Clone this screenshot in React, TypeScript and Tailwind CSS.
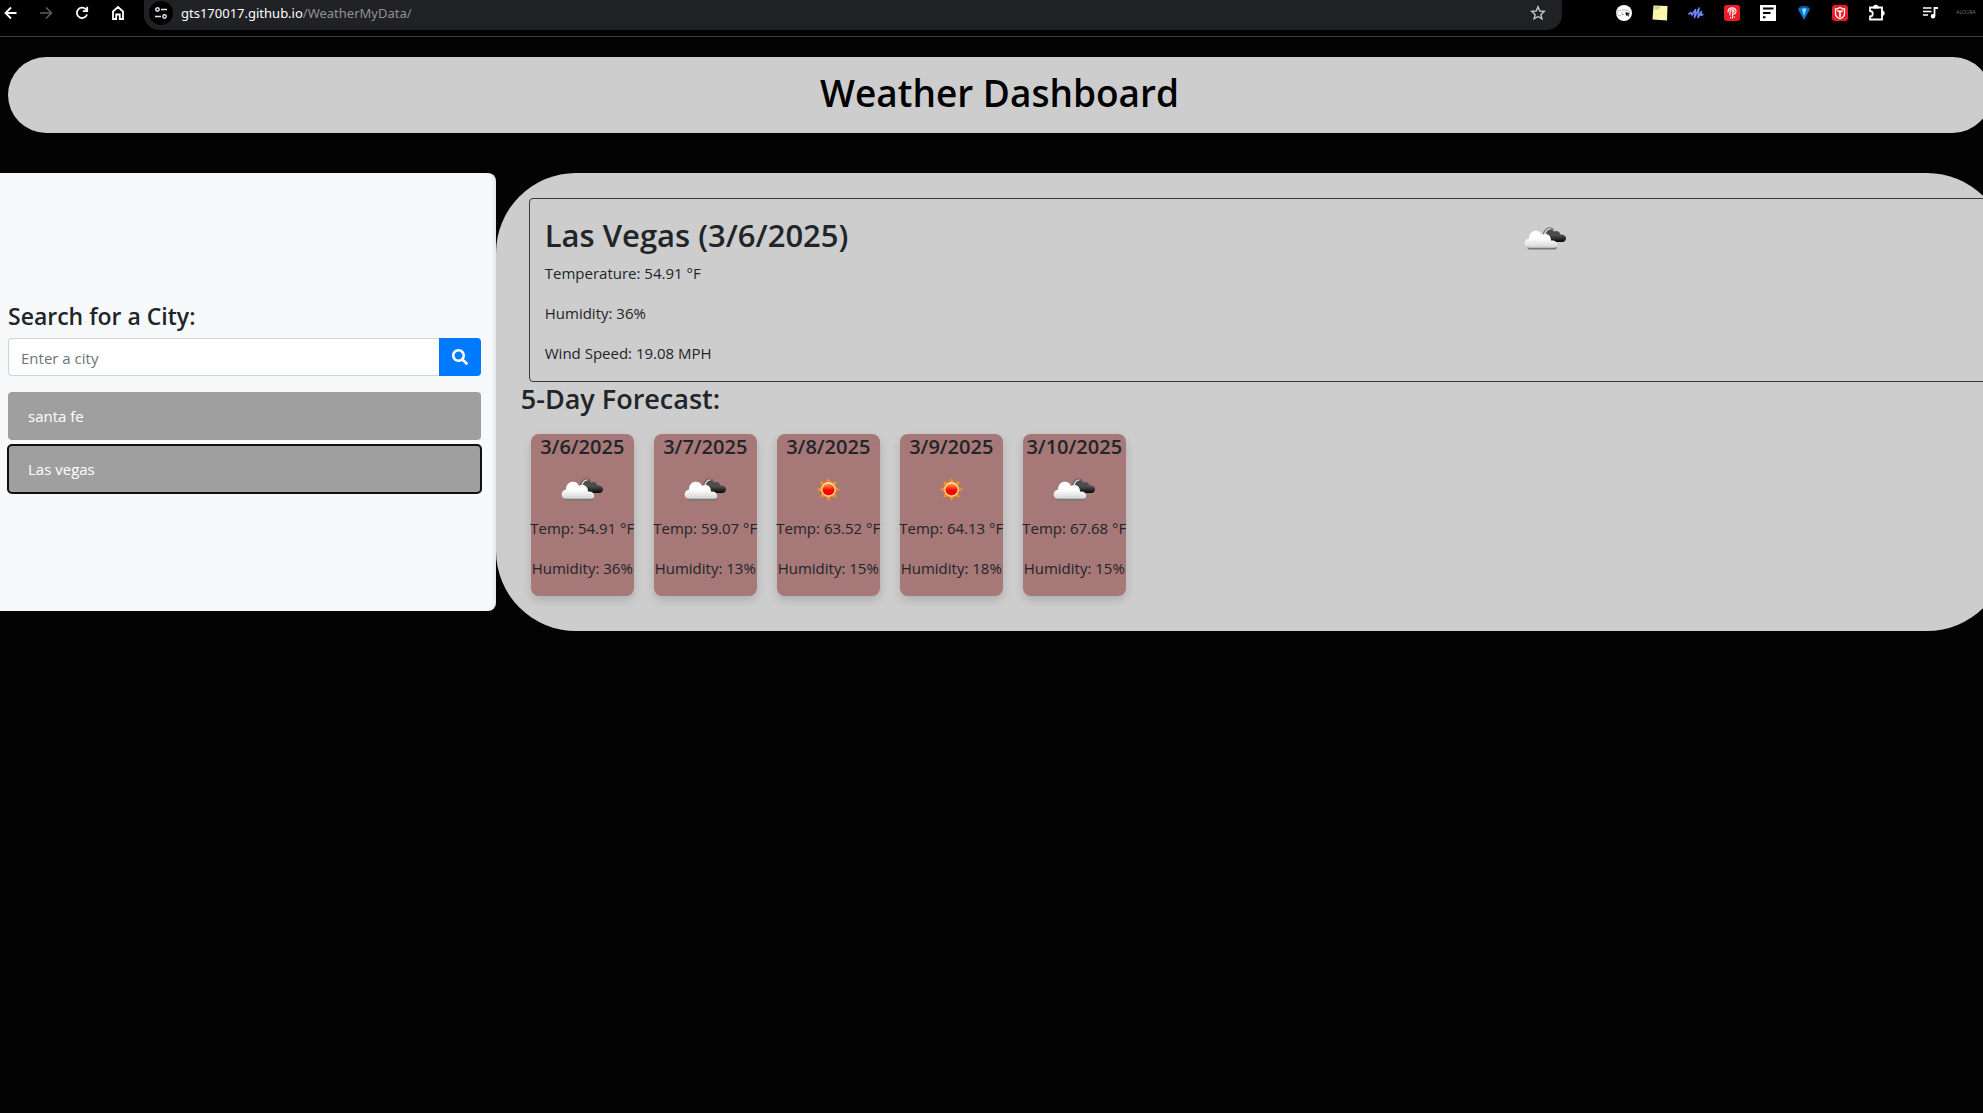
import React from "react";
import { useId } from "react";

function Clouds() {
  const id = useId();
  return (
    <svg viewBox="0 0 50 50" className="size-[50px] shrink-0" role="img" aria-label="Cloudy">
      <defs>
        <linearGradient id={id + "w"} x1="0" y1="0" x2="0" y2="1">
          <stop offset="0.45" stopColor="#ffffff" />
          <stop offset="0.9" stopColor="#dcdcdc" />
          <stop offset="1" stopColor="#b0b0b0" />
        </linearGradient>
        <linearGradient id={id + "d"} x1="0" y1="0" x2="0" y2="1">
          <stop offset="0.5" stopColor="#4c4c4c" />
          <stop offset="1" stopColor="#080808" />
        </linearGradient>
      </defs>
      <path d="M25 20.500C25 15.500 32 14.500 34 18.500C37 17 40 19 40.500 21.500C44 21 46.500 23.500 46 26C45.500 28.500 43.500 29 41 29H28Z" fill={"url(#" + id + "d)"} />
      <path d="M23.500 21C24.500 14 31.500 13.500 34 17" fill="none" stroke="#5a5a5a" strokeWidth="1" />
      <path d="M25 21.500C26 17.500 28.500 16 30.500 16" fill="none" stroke="#e8e8e8" strokeWidth="1.200" />
      <path d="M7.500 33.500H36.500C37 35 36.500 36.300 35 36.500H9.500C8 36.300 7 35 7.500 33.500Z" fill="#777777" />
      <path d="M10 35C3 35 3 26.500 9 25.500C9 16 20 15.500 22 22C26.500 19.500 31 22 31 27.500C38.500 26.500 39 35 34 35Z" fill={"url(#" + id + "w)"} />
    </svg>
  );
}

function Sun() {
  const id = useId();
  const rays = [0, 45, 90, 135, 180, 225, 270, 315];
  return (
    <svg viewBox="0 0 50 50" className="size-[50px] shrink-0" role="img" aria-label="Clear sky">
      <defs>
        <linearGradient id={id} x1="0" y1="0" x2="0" y2="1">
          <stop offset="0" stopColor="#ffb070" />
          <stop offset="0.35" stopColor="#ff4a1c" />
          <stop offset="0.55" stopColor="#fa0400" />
        </linearGradient>
      </defs>
      {rays.map((r) => (
        <path key={r} d="M25.500 13.700L28.700 20H22.300Z" fill="#f7931a" transform={`rotate(${r} 25.500 25.500)`} />
      ))}
      <circle cx="25.500" cy="25.500" r="7.500" fill="#ff9a2a" />
      <circle cx="25.500" cy="25.500" r="6.600" fill={"url(#" + id + ")"} stroke="#ffe9b8" strokeWidth="1.100" />
    </svg>
  );
}

const toolButton = "flex h-6 w-6 shrink-0 items-center justify-center";

function BrowserBar() {
  return (
    <nav aria-label="Browser toolbar" className="flex h-[37px] items-start border-b border-[#3c3c3c] bg-black pr-[5px]">
      <div className="flex h-[26px] items-center gap-3 text-white">
        <button aria-label="Back" className="flex h-6 w-[22px] items-center justify-center">
          <svg viewBox="0 0 16 16" className="size-4" fill="none" stroke="currentColor" strokeWidth="1.800"><path d="M13.500 8H3M8 2.500L2.500 8L8 13.500" /></svg>
        </button>
        <button aria-label="Forward" className={toolButton + " text-[#5c5c5c]"}>
          <svg viewBox="0 0 16 16" className="size-4" fill="none" stroke="currentColor" strokeWidth="1.600"><path d="M2 8H13M8 2.500L13.500 8L8 13.500" /></svg>
        </button>
        <button aria-label="Reload" className={toolButton}>
          <svg viewBox="0 0 16 16" className="size-4" fill="none" stroke="currentColor" strokeWidth="1.800"><path d="M13 9.500A5.200 5.200 0 1 1 12.300 4.800M13.200 1.800V6.200H8.800" /></svg>
        </button>
        <button aria-label="Home" className={toolButton}>
          <svg viewBox="0 0 16 16" className="size-4" fill="none" stroke="currentColor" strokeWidth="1.800"><path d="M3 14V6.500L8 2L13 6.500V14H9.800V9.500H6.200V14Z" /></svg>
        </button>
      </div>
      <div className="ml-[14px] flex h-[30px] flex-1 items-start rounded-b-[15px] bg-[#202124] pl-[5px] pr-3">
        <button aria-label="View site information" className="mt-px flex size-6 items-center justify-center rounded-full bg-black text-[#e3e3e3]">
          <svg viewBox="0 0 16 16" className="size-4" fill="none" stroke="currentColor" strokeWidth="1.500"><circle cx="4.500" cy="4.500" r="1.700" /><path d="M8 4.500H14M2 11.500H8" /><circle cx="11.500" cy="11.500" r="1.700" /></svg>
        </button>
        <a href="#dashboard" className="ml-2 flex-1 font-['Noto_Sans',sans-serif] text-[13px] leading-[26px] text-[#8f9194]"><span className="text-white">gts170017.github.io</span>/WeatherMyData/</a>
        <button aria-label="Bookmark this tab" className={toolButton + " mt-px text-[#c7c7c7]"}>
          <svg viewBox="0 0 16 16" className="size-4" fill="none" stroke="currentColor" strokeWidth="1.400"><path d="M8 1.800L9.800 6L14.300 6.400L10.900 9.400L11.900 13.800L8 11.500L4.100 13.800L5.100 9.400L1.700 6.400L6.200 6Z" /></svg>
        </button>
      </div>
      <div className="ml-[50px] flex h-[26px] items-center gap-3">
        <button aria-label="Cursor extension" className={toolButton}>
          <svg viewBox="0 0 16 16" className="size-4"><circle cx="8" cy="8" r="8" fill="#fff" /><path d="M5 5.500A2.800 2.800 0 1 0 5 10.500M6 5H11A3 3 0 0 1 13.500 7.500M6 7V9.500H8" fill="none" stroke="#999" strokeWidth="0.800" /><path d="M9.500 7L14 8.500L12.300 9.500L13.200 11L12.200 11.500L11.200 10L10 11Z" fill="#111" /></svg>
        </button>
        <button aria-label="Sticky notes" className={toolButton}>
          <svg viewBox="0 0 16 16" className="size-4"><path d="M1.500 0.500L15.500 1L15 15.500L0.500 14.500Z" fill="#fbf7b0" /><path d="M2.500 2.200H8M2.500 3.800H7" stroke="#a8a470" strokeWidth="0.800" /></svg>
        </button>
        <button aria-label="Speech extension" className={toolButton}>
          <svg viewBox="0 0 16 16" className="size-4" fill="none" stroke="#6b85f5" strokeWidth="1.600" strokeLinejoin="round" strokeLinecap="round"><path d="M1 9L3 7.500L4 10L7.500 4.500L6.500 12.500L11 3L10 12.500L13.500 6.500L13 10.500L15 9.500" /></svg>
        </button>
        <button aria-label="Fingerprint extension" className={toolButton}>
          <svg viewBox="0 0 16 16" className="size-4" fill="none" stroke="#fff"><rect width="16" height="16" rx="3" fill="#ec1c24" stroke="none" /><path d="M4 7.500C3.500 1.500 12 1.500 12 6C12 8.500 10 9.300 8.500 9V13.500M6 10.500V6A2 2 0 0 1 10 6C10 7 9 7.300 8.200 7V5M6.500 12V13.500M10 12.500L10.500 11.500" strokeWidth="1.100" /></svg>
        </button>
        <button aria-label="Filter extension" className={toolButton}>
          <svg viewBox="0 0 16 16" className="size-4"><rect width="16" height="16" fill="#fff" /><path d="M3 3.500H13.500M3 8H10.500M3 12.300H5.500" stroke="#000" strokeWidth="2" /></svg>
        </button>
        <button aria-label="Diamond extension" className={toolButton}>
          <svg viewBox="0 0 16 16" className="size-4"><path d="M2 4Q4 1 8 1Q12 1 14 4L8 15Z" fill="#0a78d8" /><path d="M6 3.500H10.500L8 11Z" fill="#8ee0ff" /><path d="M2 4Q4 1 8 1Q12 1 14 4Q8 2 2 4Z" fill="#0757a8" /></svg>
        </button>
        <button aria-label="Shield extension" className={toolButton}>
          <svg viewBox="0 0 16 16" className="size-4" fill="none" stroke="#fff"><rect width="16" height="16" rx="3" fill="#ec1c24" stroke="none" /><path d="M8 2.500Q10.500 4 12.500 4V8.500C12.500 11 10.500 12.800 8 13.700C5.500 12.800 3.500 11 3.500 8.500V4Q5.500 4 8 2.500Z" strokeWidth="1.300" /><path d="M5.500 5.500L8 7L10.500 5.500M8 7V12" strokeWidth="1.600" /></svg>
        </button>
        <button aria-label="Extensions" className={toolButton}>
          <svg viewBox="0 0 18 18" className="size-[18px]" fill="none" stroke="#fff" strokeWidth="1.800"><path d="M3 3.500H15V15.500H3V12.500A2.500 2.500 0 0 0 3 7Z" /><path d="M7 3.500A1.800 1.800 0 0 1 10.600 3.500ZM15 7.500A1.800 1.800 0 0 1 15 11.100Z" fill="#fff" /></svg>
        </button>
        <button aria-label="Media controls" className="ml-[18px] flex h-6 w-6 items-center justify-center">
          <svg viewBox="0 0 16 16" className="size-4" fill="none" stroke="#fff" strokeWidth="1.500"><path d="M1 3H9.500M1 6.500H9.500M1 10H6" /><path d="M12.500 11V3H16" strokeWidth="1.800" /><circle cx="11" cy="11.300" r="1.500" fill="#fff" /></svg>
        </button>
        <button aria-label="Profile" className="flex h-6 w-6 items-center justify-center text-[5px] text-[#777777]">ALOURA</button>
      </div>
    </nav>
  );
}

const forecast = [
  { date: "3/6/2025", icon: "clouds", temp: "54.91", humidity: 36 },
  { date: "3/7/2025", icon: "clouds", temp: "59.07", humidity: 13 },
  { date: "3/8/2025", icon: "sun", temp: "63.52", humidity: 15 },
  { date: "3/9/2025", icon: "sun", temp: "64.13", humidity: 18 },
  { date: "3/10/2025", icon: "clouds", temp: "67.68", humidity: 15 },
];

function Sidebar() {
  return (
    <aside className="flex w-1/4 shrink-0 flex-col justify-center self-start rounded-r-lg bg-[#f8f9fa] pb-[118px] pl-2 pr-[15px] pt-[129px] shadow-[inset_-4px_0_6px_-4px_rgba(0,0,0,0.15)]">
      <form onSubmit={(e) => e.preventDefault()}>
        <label htmlFor="city" className="mb-2 block text-[23px] font-semibold leading-7 text-[#212529]">Search for a City:</label>
        <div className="flex h-[38px]">
          <input id="city" type="text" placeholder="Enter a city" className="min-w-0 flex-1 rounded-l border border-r-0 border-[#ced4da] bg-white px-3 pt-0.5 text-[15px] placeholder:text-[#6c757d]" />
          <button type="submit" aria-label="Search" className="flex w-[42px] items-center justify-center rounded-r bg-[#007bff] text-white">
            <svg viewBox="0 0 512 512" className="size-4" fill="currentColor"><path d="M505 442.700L405.300 343c-4.500-4.500-10.600-7-17-7H372c27.600-35.300 44-79.700 44-128C416 93.100 322.900 0 208 0S0 93.100 0 208s93.100 208 208 208c48.300 0 92.700-16.400 128-44v16.300c0 6.400 2.500 12.500 7 17l99.700 99.700c9.400 9.400 24.600 9.400 33.900 0l28.300-28.300c9.400-9.400 9.400-24.600.1-34zM208 336c-70.700 0-128-57.200-128-128 0-70.700 57.200-128 128-128 70.700 0 128 57.200 128 128 0 70.700-57.200 128-128 128z" /></svg>
          </button>
        </div>
      </form>
      <div className="mt-4 flex flex-col gap-[5px] text-[15px] text-white">
        <button className="h-12 rounded bg-[#9f9f9f] px-5 text-left">santa fe</button>
        <button className="h-12 rounded bg-[#9f9f9f] px-5 text-left outline-2 -outline-offset-1 outline-[#101010]">Las vegas</button>
      </div>
    </aside>
  );
}

export default function App() {
  return (
    <div className="min-h-screen overflow-hidden bg-[#030303] font-['Open_Sans','Noto_Sans',sans-serif] text-[#212529]">
      <BrowserBar />
      <main id="dashboard">
        <header className="-mr-2 ml-2 mt-5 flex h-[76px] items-center justify-center rounded-full bg-[#cdcdcd]">
          <h1 className="pb-1 text-[37px] font-semibold leading-[48px] text-black">Weather Dashboard</h1>
        </header>
        <div className="mt-10 flex">
          <Sidebar />
          <div className="-mr-6 min-w-0 flex-1 rounded-[80px] bg-[#cdcdcd] pb-[35px] pl-[25px] pt-[25px]">
            <section className="ml-2 flex h-[184px] gap-[11px] rounded-sm border border-[#343a40] px-[15px] pt-[14px] text-[15px] leading-6">
              <div className="w-2/3 shrink-0">
                <h2 className="mb-2 pt-1 text-[31px] font-semibold leading-9">Las Vegas (3/6/2025)</h2>
                <p className="mb-4">Temperature: 54.91 °F</p>
                <p className="mb-4">Humidity: 36%</p>
                <p>Wind Speed: 19.08 MPH</p>
              </div>
              <Clouds />
            </section>
            <h3 className="mb-[18px] text-[27px] font-semibold leading-[34px]">5-Day Forecast:</h3>
            <div className="ml-[10px] flex gap-5">
              {forecast.map((d) => (
                <article key={d.date} className="flex h-[162px] w-[103px] flex-col items-center whitespace-nowrap rounded-lg bg-[#a67878] text-[15px] leading-6 shadow-[0_4px_8px_rgba(0,0,0,0.15)]">
                  <h4 className="mb-1 text-[20px] font-semibold leading-[26px]">{d.date}</h4>
                  {d.icon === "sun" ? <Sun /> : <Clouds />}
                  <p className="mb-4 mt-0.5">Temp: {d.temp} °F</p>
                  <p>Humidity: {d.humidity}%</p>
                </article>
              ))}
            </div>
          </div>
        </div>
      </main>
    </div>
  );
}
